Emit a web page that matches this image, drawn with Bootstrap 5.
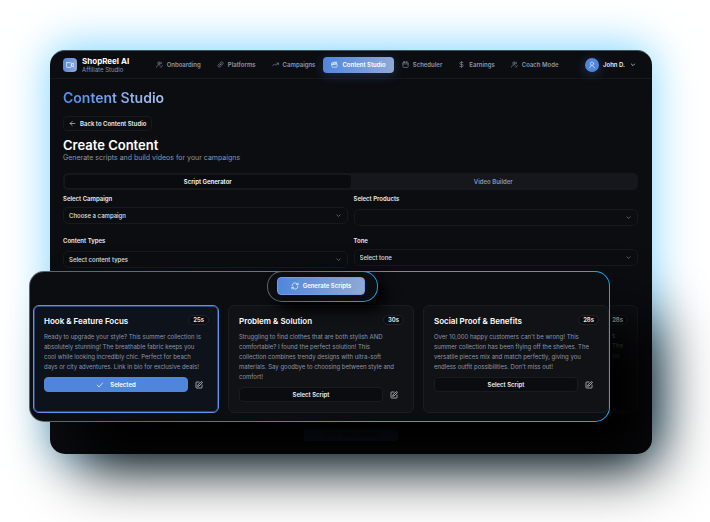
<!DOCTYPE html>
<html lang="en" data-bs-theme="dark">
<head>
<meta charset="utf-8">
<meta name="viewport" content="width=device-width, initial-scale=1">
<title>ShopReel AI – Content Studio</title>
<link href="https://cdn.jsdelivr.net/npm/bootstrap@5.3.0/dist/css/bootstrap.min.css" rel="stylesheet">
<script src="https://cdn.jsdelivr.net/npm/bootstrap@5.3.0/dist/js/bootstrap.bundle.min.js" defer></script>
<style>
  :root { --ink: #0c0d11; --line: #17191e; --muted: #8a96ab; --blue: #4f86dc; --grad: linear-gradient(100deg, #4f86dc, #91a9d6); }
  body { font-family: Inter, "Liberation Sans", sans-serif; font-size: 7px; line-height: 10px; color: #e9ecf2; background: #fff; overflow-x: hidden; }
  svg { fill: none; stroke: currentColor; stroke-width: 2; stroke-linecap: round; stroke-linejoin: round; width: 8px; height: 8px; flex: none; }
  .stage { padding: 50px 58px 68px 50px; }
  .app-window { background: var(--ink); border-radius: 15px; box-shadow: 0 -3px 44px #7cd3ff; border-top: 1px solid #46525a; }
  .topbar { height: 28px; padding: 0 15px 0 13px; border-bottom: 1px solid #16181d; }
  .logo-tile { width: 14px; height: 14px; border-radius: 4px; background: var(--grad); margin-right: 5px; color: #fff; }
  .avatar-dot { width: 14px; height: 14px; background: var(--blue); box-shadow: 0 2px 12px #4f86dc55; color: #dfe9fb; }
  .brand-name { font-size: 8px; font-weight: 700; color: #fff; }
  .brand-sub { font-size: 6px; line-height: 8px; color: var(--muted); }
  .menu-link { color: var(--muted); font-size: 6px; font-weight: 600; gap: 4px; padding: 0 8px; height: 16px; border-radius: 4px; text-decoration: none; white-space: nowrap; }
  .menu-link svg { width: 7px; height: 7px; }
  .menu-link.active { background: var(--grad); color: #fff; box-shadow: 0 2px 12px #4f86dc44; }
  .user-btn { font-size: 6px; font-weight: 600; gap: 4px; color: #fff; }
  .plain-btn { border: 0; background: none; padding: 0; color: inherit; }
  .body-pad { padding: 0 14px 13px 13px; }
  .page-title { font-size: 14px; line-height: 16px; font-weight: 600; margin: 11px 0 10px; background: linear-gradient(90deg, #4f8cec, #a9c2ec); background-clip: text; -webkit-background-clip: text; color: transparent; width: max-content; }
  .back-btn { height: 15px; padding: 0 5px; gap: 4px; border: 1px solid var(--line); border-radius: 4px; background: var(--ink); color: #e9ecf2; font-size: 6px; font-weight: 600; }
  .back-btn svg { width: 7px; height: 7px; }
  .sub-title { font-size: 13px; line-height: 16px; font-weight: 600; color: #fff; margin: 6px 0 0; }
  .page-note { color: var(--muted); }
  .tab-strip { height: 17px; margin-top: 10px; padding: 2px; border-radius: 5px; background: #15171c; }
  .tab-strip button { flex: 1 1 0; border-radius: 4px; font-size: 6px; font-weight: 600; color: var(--muted); }
  .tab-strip .active { background: #0a0b0e; color: #fff; }
  .form-grid { --bs-gutter-x: 6px; --bs-gutter-y: 0; padding-top: 4px; }
  .form-grid label { font-size: 6px; font-weight: 600; line-height: 10px; }
  .field-select { font-size: 6px; font-weight: 500; line-height: 10px; height: 17px; padding: 0 20px 0 5px; border: 1px solid var(--line); border-radius: 5px; background-color: var(--ink); background-size: 5px; background-position: right 6px center; color: #dfe3ea;
    background-image: url("data:image/svg+xml,%3Csvg xmlns='http://www.w3.org/2000/svg' viewBox='0 0 16 16'%3E%3Cpath fill='none' stroke='%238c929c' stroke-width='2' d='m2 5 6 6 6-6'/%3E%3C/svg%3E"); }
  .field-cell { height: 42px; }
  .near { margin-top: 3px; } .far { margin-top: 5px; }
  .behind { margin-top: 37px; }
  .behind .script-card { width: 186px; margin-left: auto; }
  .behind .script-card p { width: 16px; margin: 6px 0 0 auto; }
  .go-btn { display: block; width: 94px; height: 12px; margin: 16px auto 0 241px; border-radius: 3px; background: #1b3357; color: #0b101b; font-size: 6px; line-height: 10px; }
  .results { position: absolute; z-index: 2; top: 271px; left: 29px; right: 100px; padding: 0 0 8px 3px; border: 1px solid transparent; border-radius: 15px;
    background: linear-gradient(var(--ink), var(--ink)) padding-box, linear-gradient(90deg, #5e6367, #2f88ad 38%, #19a8f2 60%) border-box; box-shadow: 46px 46px 60px #000; }
  .generate-ring { position: relative; z-index: 1; width: 111px; margin: -1px auto 3px 234px; padding: 5px 12px 6px 9px; border: 1px solid transparent; border-radius: 15px;
    background: linear-gradient(var(--ink), var(--ink)) padding-box, linear-gradient(90deg, #5c5f62, #19a0e4 75%) border-box; box-shadow: 8px 8px 14px #000; }
  .generate-btn { height: 18px; border: 1px solid #6d9eea; border-radius: 4px; background: var(--grad); color: #fff; gap: 4px; font-size: 6px; font-weight: 600; }
  .card-line { gap: 9px; }
  .script-card { flex: 1 1 0; min-width: 0; height: 108px; padding: 9px 9px 9px 10px; border: 1px solid #1b1d22; border-radius: 6px; background: #111216; }
  .script-card.chosen { border-color: #5e94ec; box-shadow: inset 0 0 0 1px #2b4674; background: #0e121b; }
  .script-card h3 { font-size: 8px; line-height: 12px; font-weight: 600; color: #fff; margin: 0; }
  .script-card p { font-size: 6px; line-height: 10px; color: var(--muted); margin: 5px 0; white-space: nowrap; }
  .time-pill { height: 10px; line-height: 8px; padding: 0 4px; border: 1px solid #202228; border-radius: 5px; font-size: 6px; font-weight: 600; background: #0c0d11; }
  .pick-btn { height: 15px; border: 1px solid #191b20; border-radius: 4px; background: #0b0c0f; color: #eef1f6; font-size: 6px; font-weight: 600; gap: 6px; }
  .chosen .pick-btn { background: #4f86dc; border-color: #4f86dc; color: #fff; }
  .edit-btn { width: 21px; display: flex; align-items: center; justify-content: center; color: #e4e7ec; }
</style>
</head>
<body>
<svg class="d-none">
  <symbol id="i-user" viewBox="0 0 24 24"><circle cx="10" cy="7" r="4"/><path d="M2 21c0-5 3-8 8-8 2 0 4 .6 5 2M15 20l2 2 5-6M18 4v6"/></symbol>
  <symbol id="i-link" viewBox="0 0 24 24"><path d="M9 15l6-6M11 6l2-2a5 5 0 0 1 7 7l-2 2a5 5 0 0 1-7 0M13 18l-2 2a5 5 0 0 1-7-7l2-2a5 5 0 0 1 7 0"/></symbol>
  <symbol id="i-edit" viewBox="0 0 24 24"><path d="M12 3H5a2 2 0 0 0-2 2v14a2 2 0 0 0 2 2h14a2 2 0 0 0 2-2v-7M18.4 2.6a2.1 2.1 0 0 1 3 3L12 15l-4 1 1-4z"/></symbol>
</svg>
<div class="stage position-relative">
  <div class="app-window">
    <header class="topbar d-flex align-items-center">
      <div class="logo-tile d-flex align-items-center justify-content-center"><svg viewBox="0 0 24 24"><rect x="1" y="5" width="15" height="14" rx="2"/><path d="m16 10 6-4v12l-6-4"/></svg></div>
      <div><div class="brand-name">ShopReel AI</div><div class="brand-sub">Affiliate Studio</div></div>
      <nav class="d-flex flex-grow-1 justify-content-center" aria-label="Main">
        <a href="#" class="menu-link d-flex align-items-center"><svg viewBox="0 0 24 24"><use href="#i-user"/></svg>Onboarding</a>
        <a href="#" class="menu-link d-flex align-items-center"><svg viewBox="0 0 24 24"><use href="#i-link"/></svg>Platforms</a>
        <a href="#" class="menu-link d-flex align-items-center"><svg viewBox="0 0 24 24"><path d="m2 17 7-7 5 5 8-8M16 7h6v6"/></svg>Campaigns</a>
        <a href="#" class="menu-link active d-flex align-items-center" aria-current="page"><svg viewBox="0 0 24 24"><path d="M3 11h18v8a2 2 0 0 1-2 2H5a2 2 0 0 1-2-2zM3 11 2 7l17-4 1 4zM7 6l4 3M13 4l4 3"/></svg>Content Studio</a>
        <a href="#" class="menu-link d-flex align-items-center"><svg viewBox="0 0 24 24"><rect x="3" y="4" width="18" height="18" rx="2"/><path d="M8 1v5M16 1v5M3 10h18"/></svg>Scheduler</a>
        <a href="#" class="menu-link d-flex align-items-center"><svg viewBox="0 0 24 24"><path d="M12 1v22M17 5H9.500a3.500 3.500 0 0 0 0 7h5a3.500 3.500 0 0 1 0 7H6"/></svg>Earnings</a>
        <a href="#" class="menu-link d-flex align-items-center"><svg viewBox="0 0 24 24"><use href="#i-user"/></svg>Coach Mode</a>
      </nav>
      <button type="button" class="plain-btn user-btn d-flex align-items-center"><span class="avatar-dot rounded-circle d-flex align-items-center justify-content-center"><svg viewBox="0 0 24 24"><circle cx="12" cy="8" r="5"/><path d="M5 21c0-4 3-7 7-7s7 3 7 7"/></svg></span>John D.<svg viewBox="0 0 24 24"><path d="m7 9 5 5 5-5"/></svg></button>
    </header>
    <main class="body-pad">
      <h1 class="page-title">Content Studio</h1>
      <button type="button" class="back-btn d-flex align-items-center"><svg viewBox="0 0 24 24"><path d="M20 12H4M11 5l-7 7 7 7"/></svg>Back to Content Studio</button>
      <h2 class="sub-title">Create Content</h2>
      <div class="page-note text-nowrap">Generate scripts and build videos for your campaigns</div>
      <div class="tab-strip d-flex" role="tablist">
        <button type="button" role="tab" aria-selected="true" class="plain-btn active">Script Generator</button>
        <button type="button" role="tab" aria-selected="false" class="plain-btn">Video Builder</button>
      </div>
      <form class="row form-grid">
        <div class="col-6 field-cell"><label class="d-block" for="campaign">Select Campaign</label><select id="campaign" class="form-select field-select near"><option>Choose a campaign</option></select></div>
        <div class="col-6 field-cell"><label class="d-block" for="products">Select Products</label><select id="products" class="form-select field-select far"><option></option></select></div>
        <div class="col-6"><label class="d-block" for="types">Content Types</label><select id="types" class="form-select field-select far"><option>Select content types</option></select></div>
        <div class="col-6"><label class="d-block" for="tone">Tone</label><select id="tone" class="form-select field-select near"><option>Select tone</option></select></div>
      </form>
      <div class="behind" aria-hidden="true">
        <div class="script-card"><div class="d-flex justify-content-end"><span class="time-pill">28s</span></div>
        <p>s<br>The<br>ou</p></div>
      </div>
      <button type="button" class="plain-btn go-btn">Go to Video Builder</button>
    </main>
  </div>

  <section class="results" aria-label="Generated scripts">
    <div class="generate-ring"><button type="button" class="generate-btn w-100 d-flex align-items-center justify-content-center"><svg viewBox="0 0 24 24"><path d="M3 11a9 9 0 0 1 15-6l3 3M21 3v5h-5M21 13a9 9 0 0 1-15 6l-3-3M3 21v-5h5"/></svg>Generate Scripts</button></div>
    <div class="card-line d-flex">
      <article class="script-card chosen"><div class="d-flex justify-content-between align-items-start"><h3>Hook &amp; Feature Focus</h3><span class="time-pill">25s</span></div>
        <p>Ready to upgrade your style? This summer collection is<br>absolutely stunning! The breathable fabric keeps you<br>cool while looking incredibly chic. Perfect for beach<br>days or city adventures. Link in bio for exclusive deals!</p>
        <div class="d-flex"><button type="button" class="pick-btn flex-grow-1 d-flex align-items-center justify-content-center"><svg viewBox="0 0 24 24"><path d="m4 12 5 6L20 6"/></svg>Selected</button><button type="button" class="plain-btn edit-btn" aria-label="Edit"><svg viewBox="0 0 24 24"><use href="#i-edit"/></svg></button></div></article>
      <article class="script-card"><div class="d-flex justify-content-between align-items-start"><h3>Problem &amp; Solution</h3><span class="time-pill">30s</span></div>
        <p>Struggling to find clothes that are both stylish AND<br>comfortable? I found the perfect solution! This<br>collection combines trendy designs with ultra-soft<br>materials. Say goodbye to choosing between style and<br>comfort!</p>
        <div class="d-flex"><button type="button" class="pick-btn flex-grow-1">Select Script</button><button type="button" class="plain-btn edit-btn" aria-label="Edit"><svg viewBox="0 0 24 24"><use href="#i-edit"/></svg></button></div></article>
      <article class="script-card"><div class="d-flex justify-content-between align-items-start"><h3>Social Proof &amp; Benefits</h3><span class="time-pill">28s</span></div>
        <p>Over 10,000 happy customers can't be wrong! This<br>summer collection has been flying off the shelves. The<br>versatile pieces mix and match perfectly, giving you<br>endless outfit possibilities. Don't miss out!</p>
        <div class="d-flex"><button type="button" class="pick-btn flex-grow-1">Select Script</button><button type="button" class="plain-btn edit-btn" aria-label="Edit"><svg viewBox="0 0 24 24"><use href="#i-edit"/></svg></button></div></article>
    </div>
  </section>
</div>
</body>
</html>
